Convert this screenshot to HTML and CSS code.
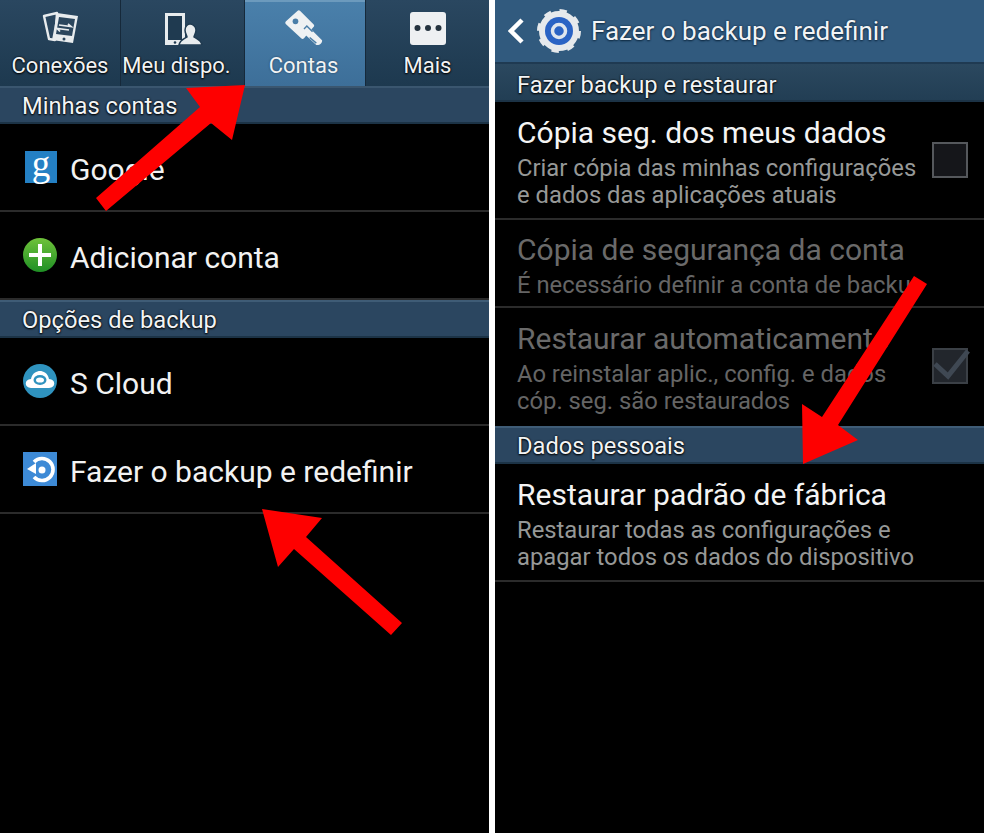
FILE: index.html
```html
<!DOCTYPE html>
<html lang="pt">
<head>
<meta charset="utf-8">
<title>Fazer o backup e redefinir</title>
<link rel="stylesheet" href="styles.css">
</head>
<body>
<main class="page">
  <section class="panel">
    <nav class="tabs">
      <div class="tab">
        <svg class="tab-icon" viewBox="0 0 40 36">
          <path d="M4 7l13-3-2 27-6-1z" fill="#2a465e" stroke="#e8ecee" stroke-width="2.400" stroke-linejoin="round"/>
          <path d="M17 4l21 3-5 27-21-3z" fill="#e8ecee"/>
          <path d="M19 8l16 2-3 17-16-2z" fill="#2b465d"/>
          <path d="M19 16l12 1.500-3-2.500M29 21l-12-1.500 3 3" fill="none" stroke="#e8ecee" stroke-width="1.700"/>
          <circle cx="24" cy="30" r="1.500" fill="#2b465d"/>
        </svg>
        <span>Conexões</span>
      </div>
      <div class="tab tab-offset">
        <svg class="tab-icon" viewBox="0 0 40 36">
          <rect x="2" y="4" width="20" height="32" fill="#e8ecee"/>
          <rect x="5" y="7" width="14" height="24" fill="#1f3a50"/>
          <circle cx="12" cy="33.500" r="1.300" fill="#1f3a50"/>
          <path d="M16 36c1-5 5-6 8-8 0-2-2-3-2-7 0-4 3-6 5-6s6 2 6 6c0 4-2 5-2 7 3 2 7 3 8 8z" fill="#e8ecee" stroke="#1f3a50" stroke-width="1.500"/>
        </svg>
        <span>Meu dispo.</span>
      </div>
      <div class="tab tab-active">
        <svg class="tab-icon" viewBox="0 0 40 38">
          <path d="M18 24l6-6 15 15c1 2-3 6-6 5z" fill="#eef1f3"/>
          <path d="M1 13L13 2c1-1 2-1 3 0l14 14c1 1 1 2 0 3L20 31c-1 1-2 1-3 0L1 16c-1-1-1-2 0-3z" fill="#eef1f3"/>
          <circle cx="11" cy="13" r="3" fill="#4a7ea8"/>
          <path d="M20 21l3-3 6 6M26 30l7 6" fill="none" stroke="#4a7ea8" stroke-width="1.500"/>
        </svg>
        <span>Contas</span>
      </div>
      <div class="tab">
        <svg class="tab-icon" viewBox="0 0 40 36"><rect x="2" y="3" width="36" height="33" rx="3" fill="#eef0f2"/><circle cx="9.500" cy="19" r="3" fill="#25333f"/><circle cx="20" cy="19" r="3" fill="#25333f"/><circle cx="30.500" cy="19" r="3" fill="#25333f"/></svg>
        <span>Mais</span>
      </div>
    </nav>
    <h2 class="section-head">Minhas contas</h2>
    <div class="row row-icon">
      <div class="app-icon icon-google">g</div>
      <span class="row-label">Google</span>
    </div>
    <div class="row row-icon">
      <svg class="app-svg" viewBox="0 0 36 36"><defs><linearGradient id="grn" x1="0" y1="0" x2="0" y2="1"><stop offset="0" stop-color="#6fc23a"/><stop offset="1" stop-color="#1f8f25"/></linearGradient></defs><circle cx="18" cy="18" r="17" fill="url(#grn)"/><path d="M18 7v22M7 18h22" stroke="#fff" stroke-width="4"/></svg>
      <span class="row-label">Adicionar conta</span>
    </div>
    <h2 class="section-head section-tight">Opções de backup</h2>
    <div class="row row-icon">
      <svg class="app-svg" viewBox="0 0 36 36"><circle cx="18" cy="18" r="17" fill="#2f93bf"/><path d="M9 25c-7 0-7-9 0-9 1-6 6-8 9-8s8 2 9 8c7 0 7 9 0 9z" fill="#fff"/><ellipse cx="18" cy="17" rx="6.500" ry="5" fill="#2f93bf"/><ellipse cx="18" cy="17" rx="4" ry="2.600" fill="#fff"/></svg>
      <span class="row-label">S Cloud</span>
    </div>
    <div class="row row-icon">
      <svg class="app-svg" viewBox="0 0 36 36"><rect x="1" y="1" width="34" height="34" fill="#3d8ad6"/><path d="M12 11a11 11 0 1 1 0 15" fill="none" stroke="#fff" stroke-width="3.600"/><path d="M5 18l9-6v11z" fill="#fff"/><circle cx="20" cy="19" r="3.500" fill="#fff"/></svg>
      <span class="row-label">Fazer o backup e redefinir</span>
    </div>
  </section>

  <section class="panel">
    <header class="action-bar">
      <svg class="back" viewBox="0 0 16 26"><path d="M14 2L3 13l11 11" fill="none" stroke="#fff" stroke-width="4.500"/></svg>
      <svg class="gear" viewBox="0 0 44 44"><circle cx="22" cy="22" r="16.500" fill="none" stroke="#e6e9ec" stroke-width="7"/><circle cx="22" cy="22" r="19.500" fill="none" stroke="#e6e9ec" stroke-width="5" stroke-dasharray="7 8.300"/><circle cx="22" cy="22" r="14" fill="#2a63c4"/><circle cx="22" cy="22" r="6.500" fill="#2a63c4" stroke="#dfe6ee" stroke-width="3.500"/></svg>
      <h1 class="action-title">Fazer o backup e redefinir</h1>
    </header>
    <h2 class="section-head section-first">Fazer backup e restaurar</h2>
    <div class="row row-tall">
      <div class="row-text">
        <div class="row-title">Cópia seg. dos meus dados</div>
        <div class="row-sub">Criar cópia das minhas configurações<br>e dados das aplicações atuais</div>
      </div>
      <span class="check"></span>
    </div>
    <div class="row row-short">
      <div class="row-text row-off">
        <div class="row-title">Cópia de segurança da conta</div>
        <div class="row-sub">É necessário definir a conta de backup</div>
      </div>
    </div>
    <div class="row row-plain row-tall">
      <div class="row-text row-off">
        <div class="row-title">Restaurar automaticamente</div>
        <div class="row-sub">Ao reinstalar aplic., config. e dados<br>cóp. seg. são restaurados</div>
      </div>
      <span class="check check-on"><svg viewBox="0 0 38 36"><path d="M3 16l13 12L36 3" fill="none" stroke="#3f4853" stroke-width="5"/></svg></span>
    </div>
    <h2 class="section-head section-tight">Dados pessoais</h2>
    <div class="row row-tall">
      <div class="row-text">
        <div class="row-title">Restaurar padrão de fábrica</div>
        <div class="row-sub">Restaurar todas as configurações e<br>apagar todos os dados do dispositivo</div>
      </div>
    </div>
  </section>

  <svg class="arrows" viewBox="0 0 984 833" aria-hidden="true">
    <polygon points="245,85 232,140 211,123 106,211 96,198 200,107 186,88"/>
    <polygon points="262,509 322,518 306,537 402,623 391,635 294,549 278,567"/>
    <polygon points="803,464 802,404 822,417 914,276 927,284 838,425 858,440"/>
  </svg>
</main>
</body>
</html>
```
FILE: styles.css
```css
* { box-sizing: border-box; }
html, body { margin: 0; padding: 0; }
body { background: #fff; width: 984px; height: 833px; overflow: hidden; font-family: Roboto, "Liberation Sans", sans-serif; color: #fff; }
.page { position: relative; display: flex; gap: 6px; width: 984px; height: 833px; }
.panel { width: 489px; height: 833px; background: #000; display: flex; flex-direction: column; }
.tabs { display: grid; grid-template-columns: 121px 124px 121px 123px; height: 86px; flex: none; }
.tab { display: flex; flex-direction: column; align-items: center; padding-top: 9px; background: linear-gradient(#2a4760, #1d394f); border-right: 1px solid #16293a; font-size: 22px; line-height: 26px; color: #f1f3f4; text-shadow: 0 0 2px #000, 0 1px 2px #000; white-space: nowrap; }
.tab:last-child { border-right: 0; }
.tab-offset span { margin-right: 12px; }
.tab-active { background: linear-gradient(#4a80ab, #3d6f99); box-shadow: inset 0 2px 0 #6c9abd; text-shadow: 0 0 2px #1d3a55; }
.tab-active span { margin-right: 3px; }
.tab-icon { width: 40px; height: 36px; display: block; margin-bottom: 8px; }
.tab-active .tab-icon { margin-left: -2px; }
.section-head { margin: 0; height: 38px; flex: none; background: #2b4660; border-top: 2px solid #3a566f; border-bottom: 2px solid #1c3346; padding-left: 22px; font-size: 23.700px; font-weight: 400; line-height: 37px; color: #f2f4f5; text-shadow: 0 0 2px #000, 0 1px 2px #000; }
.section-first { height: 40px; background: linear-gradient(#2b485f, #223e54); border-top: 2px solid #1f3a52; line-height: 42px; }
.section-tight { border-top-color: #3f5c76; }
.row { display: flex; align-items: center; border-bottom: 2px solid #2b2b2b; flex: none; padding-left: 22px; }
.row-icon { height: 88px; gap: 12px; }
.row-label { font-size: 30px; color: #f2f2f2; margin-top: 4px; }
.app-svg { width: 36px; height: 36px; flex: none; }
.app-icon { width: 32px; height: 32px; margin-left: 3px; margin-right: 1px; flex: none; }
.icon-google { background: #2480c4; font-family: "Liberation Serif", serif; font-size: 37px; line-height: 26px; text-align: center; color: #fff; }
.action-bar { height: 62px; flex: none; background: #315a7e; display: flex; align-items: center; padding-left: 13px; }
.back { width: 16px; height: 26px; flex: none; }
.gear { width: 44px; height: 44px; flex: none; margin-left: 13px; }
.action-title { margin: 0 0 0 10px; font-size: 26px; font-weight: 400; color: #f2f4f6; text-shadow: 0 0 2px #0f2a42, 0 1px 2px #0f2a42; }
.row-tall { height: 118px; padding-right: 16px; justify-content: space-between; }
.row-short { height: 88px; }
.row-plain { border-bottom-color: transparent; }
.row-text { white-space: nowrap; padding-top: 5px; }
.row-title { font-size: 30px; line-height: 34px; color: #f4f4f4; }
.row-sub { font-size: 23.800px; line-height: 27px; color: #969897; margin-top: 5px; }
.row-off .row-title { color: #6a6a6a; }
.row-off .row-sub { color: #656565; }
.check { width: 36px; height: 36px; border: 2px solid #55585c; background: #15161a; flex: none; position: relative; }
.check svg { position: absolute; left: -2px; top: -2px; width: 38px; height: 36px; }
.check-on { background: #22262c; border-color: #3b4046; }
.arrows { position: absolute; left: 0; top: 0; width: 984px; height: 833px; fill: #fe0000; pointer-events: none; }
```
